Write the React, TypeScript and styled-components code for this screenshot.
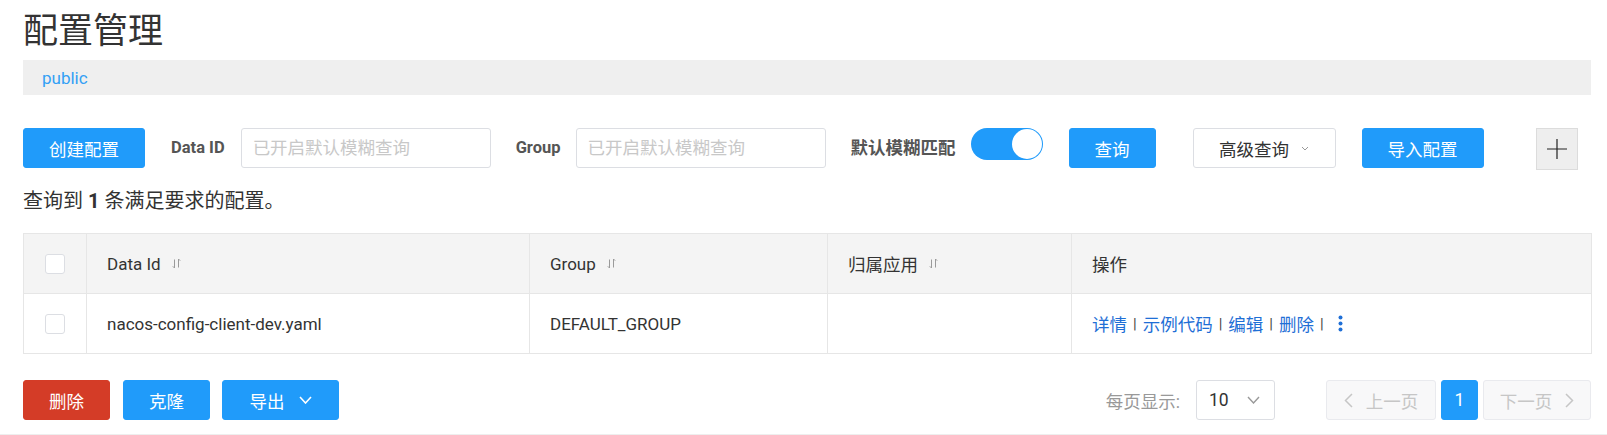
import React from "react";
import styled, { createGlobalStyle } from "styled-components";

const GlobalStyle = createGlobalStyle`
  html, body { margin: 0; padding: 0; background: #fff; }
  body { font-family: Roboto, "Noto Sans CJK SC", sans-serif; color: #333; }
  * { box-sizing: border-box; }
`;

const Page = styled.div`
  width: 1607px;
  padding: 0 16px 0 23px;
  display: flex;
  flex-direction: column;
`;

const Title = styled.h1`
  margin: 10px 0 0;
  height: 36px;
  font-family: "Noto Sans CJK SC", sans-serif;
  font-size: 35px;
  line-height: 36px;
  font-weight: 400;
  color: #333;
`;

const NamespaceBar = styled.div`
  margin-top: 14px;
  height: 35px;
  background: #efefef;
  display: flex;
  align-items: center;
  padding-left: 19px;
  font-size: 17px;
  color: #33a0f5;
`;

const Toolbar = styled.div`
  margin-top: 33px;
  height: 42px;
  display: flex;
  align-items: flex-start;
`;

const Button = styled.button<{ $variant?: "primary" | "danger" | "normal"; $w: number; $ml?: number }>`
  width: ${(p) => p.$w}px;
  height: 40px;
  margin-left: ${(p) => p.$ml ?? 0}px;
  flex: none;
  border-radius: 3px;
  display: flex;
  align-items: center;
  justify-content: center;
  gap: ${(p) => (p.$variant === "normal" ? 12 : 14)}px;
  font-family: Roboto, "Noto Sans CJK SC", sans-serif;
  font-size: 17.5px;
  cursor: pointer;
  padding: 0;
  border: 1px solid
    ${(p) => (p.$variant === "danger" ? "#d43c27" : p.$variant === "normal" ? "#dcdee3" : "#209bfa")};
  background: ${(p) => (p.$variant === "danger" ? "#d43c27" : p.$variant === "normal" ? "#fff" : "#209bfa")};
  color: ${(p) => (p.$variant === "normal" ? "#333" : "#fff")};
`;

const FieldLabel = styled.span<{ $ml: number; $cjk?: boolean }>`
  margin-left: ${(p) => p.$ml}px;
  line-height: 40px;
  font-size: ${(p) => (p.$cjk ? 17.5 : 16.5)}px;
  font-weight: 700;
  color: #555;
  white-space: nowrap;
`;

const SearchInput = styled.input<{ $ml: number }>`
  margin-left: ${(p) => p.$ml}px;
  width: 250px;
  height: 40px;
  border: 1px solid #dcdee3;
  border-radius: 3px;
  padding: 0 11px;
  font-family: Roboto, "Noto Sans CJK SC", sans-serif;
  font-size: 17.5px;
  color: #333;
  outline: none;
  &::placeholder { color: #c8c8c8; }
`;

const Switch = styled.div<{ $ml: number }>`
  margin-left: ${(p) => p.$ml}px;
  width: 72px;
  height: 32px;
  border-radius: 16px;
  background: #209bfa;
  display: flex;
  align-items: center;
  justify-content: flex-end;
  padding: 0 1px;
  flex: none;
`;

const Knob = styled.span`
  width: 30px;
  height: 30px;
  border-radius: 50%;
  background: #fff;
`;

const PlusButton = styled.button<{ $ml: number }>`
  margin-left: ${(p) => p.$ml}px;
  width: 42px;
  height: 42px;
  border: 1px solid #dcdcdc;
  background: #eee;
  display: flex;
  align-items: center;
  justify-content: center;
  padding: 0;
  flex: none;
`;

const Summary = styled.div`
  margin-top: 21px;
  font-size: 20px;
  line-height: 20px;
  color: #333;
  & strong { font-weight: 700; }
`;

const Table = styled.table`
  margin-top: 22px;
  width: 1568px;
  border-collapse: collapse;
  table-layout: fixed;
`;

const Th = styled.th<{ $center?: boolean; $cjk?: boolean }>`
  height: 60px;
  padding: ${(p) => (p.$center ? "0" : "0 20px")};
  text-align: ${(p) => (p.$center ? "center" : "left")};
  background: #f4f4f4;
  border: 1px solid #e6e6e6;
  font-weight: 400;
  font-size: ${(p) => (p.$cjk ? 17.5 : 17)}px;
  color: #333;
  vertical-align: middle;
`;

const Td = styled.td<{ $center?: boolean }>`
  height: 60px;
  padding: ${(p) => (p.$center ? "0" : "0 20px")};
  text-align: ${(p) => (p.$center ? "center" : "left")};
  background: #fff;
  border: 1px solid #e6e6e6;
  font-size: 17px;
  color: #333;
  vertical-align: middle;
`;

const HeadInner = styled.span`
  display: inline-flex;
  align-items: center;
  gap: 11px;
`;

const CheckBox = styled.span`
  display: inline-block;
  width: 20px;
  height: 20px;
  border: 1px solid #dcdee3;
  border-radius: 3px;
  background: #fff;
  vertical-align: middle;
`;

const Actions = styled.span`
  display: inline-flex;
  align-items: center;
  font-size: 17.5px;
`;

const ActionLink = styled.a`
  color: #1f6fd6;
  text-decoration: none;
  cursor: pointer;
`;

const Sep = styled.span`
  color: #444;
  margin: 0 6px;
  font-size: 15px;
`;

const MoreIcon = styled.span`
  margin-left: 8px;
  display: inline-flex;
`;

const BottomBar = styled.div`
  margin-top: 26px;
  display: flex;
  justify-content: space-between;
  align-items: center;
`;

const Group = styled.div`
  display: flex;
  align-items: center;
`;

const PageSizeLabel = styled.span`
  font-size: 17.5px;
  color: #999;
`;

const Select = styled.div`
  margin-left: 16px;
  width: 79px;
  height: 40px;
  border: 1px solid #dcdee3;
  border-radius: 3px;
  display: flex;
  align-items: center;
  justify-content: space-between;
  padding: 0 14px 0 12px;
  font-size: 17.5px;
  color: #333;
`;

const PagerButton = styled.button<{ $w: number; $ml: number; $current?: boolean }>`
  margin-left: ${(p) => p.$ml}px;
  width: ${(p) => p.$w}px;
  height: 40px;
  border-radius: 3px;
  border: 1px solid ${(p) => (p.$current ? "#209bfa" : "#e9eaee")};
  background: ${(p) => (p.$current ? "#209bfa" : "#f8f8f9")};
  color: ${(p) => (p.$current ? "#fff" : "#c6c6c6")};
  font-family: Roboto, "Noto Sans CJK SC", sans-serif;
  font-size: 17.5px;
  display: flex;
  align-items: center;
  justify-content: center;
  gap: 13px;
  padding: 0;
`;

const Footer = styled.div`
  margin-top: 14px;
  margin-left: -23px;
  margin-right: -16px;
  border-top: 1px solid #eee;
  height: 2px;
`;

const SortIcon = () => (
  <svg width="9" height="11" viewBox="0 0 9 11" fill="none" stroke="#9a9a9a" strokeWidth="1">
    <path d="M2.5 1.5v8.5M2.5 10L0.8 8.3" />
    <path d="M6.5 9.5V1M6.5 1l1.7 1.7" />
  </svg>
);

const Chevron = ({ color, w, h, sw }: { color: string; w: number; h: number; sw: number }) => (
  <svg width={w} height={h} viewBox={`0 0 ${w} ${h}`} fill="none" stroke={color} strokeWidth={sw}>
    <path d={`M1 1L${w / 2} ${h - 1}L${w - 1} 1`} />
  </svg>
);

const SideChevron = ({ dir }: { dir: "left" | "right" }) => (
  <svg width="9" height="15" viewBox="0 0 9 15" fill="none" stroke="#c6c6c6" strokeWidth="1.5">
    <path d={dir === "left" ? "M8 1L1.5 7.5L8 14" : "M1 1L7.5 7.5L1 14"} />
  </svg>
);

const Dots = () => (
  <svg width="5" height="17" viewBox="0 0 5 17" fill="#1f6fd6">
    <circle cx="2.5" cy="2.5" r="2" />
    <circle cx="2.5" cy="8.5" r="2" />
    <circle cx="2.5" cy="14.5" r="2" />
  </svg>
);

export default function App() {
  return (
    <>
      <GlobalStyle />
      <Page>
        <Title>配置管理</Title>
        <NamespaceBar>public</NamespaceBar>

        <Toolbar>
          <Button $variant="primary" $w={122}>创建配置</Button>
          <FieldLabel $ml={26}>Data ID</FieldLabel>
          <SearchInput $ml={16} placeholder="已开启默认模糊查询" />
          <FieldLabel $ml={25}>Group</FieldLabel>
          <SearchInput $ml={15} placeholder="已开启默认模糊查询" />
          <FieldLabel $ml={25} $cjk>默认模糊匹配</FieldLabel>
          <Switch $ml={15}>
            <Knob />
          </Switch>
          <Button $variant="primary" $w={87} $ml={26}>查询</Button>
          <Button $variant="normal" $w={143} $ml={37}>
            高级查询
            <Chevron color="#999" w={8} h={5} sw={1} />
          </Button>
          <Button $variant="primary" $w={122} $ml={26}>导入配置</Button>
          <PlusButton $ml={52}>
            <svg width="20" height="20" viewBox="0 0 20 20" stroke="#222" strokeWidth="1.2">
              <path d="M10 0v20M0 10h20" />
            </svg>
          </PlusButton>
        </Toolbar>

        <Summary>
          查询到 <strong>1</strong> 条满足要求的配置。
        </Summary>

        <Table>
          <colgroup>
            <col style={{ width: 63 }} />
            <col style={{ width: 443 }} />
            <col style={{ width: 298 }} />
            <col style={{ width: 244 }} />
            <col style={{ width: 520 }} />
          </colgroup>
          <thead>
            <tr>
              <Th $center>
                <CheckBox />
              </Th>
              <Th>
                <HeadInner>
                  Data Id <SortIcon />
                </HeadInner>
              </Th>
              <Th>
                <HeadInner>
                  Group <SortIcon />
                </HeadInner>
              </Th>
              <Th $cjk>
                <HeadInner>
                  归属应用 <SortIcon />
                </HeadInner>
              </Th>
              <Th $cjk>操作</Th>
            </tr>
          </thead>
          <tbody>
            <tr>
              <Td $center>
                <CheckBox />
              </Td>
              <Td>nacos-config-client-dev.yaml</Td>
              <Td>DEFAULT_GROUP</Td>
              <Td />
              <Td>
                <Actions>
                  <ActionLink>详情</ActionLink>
                  <Sep>|</Sep>
                  <ActionLink>示例代码</ActionLink>
                  <Sep>|</Sep>
                  <ActionLink>编辑</ActionLink>
                  <Sep>|</Sep>
                  <ActionLink>删除</ActionLink>
                  <Sep>|</Sep>
                  <MoreIcon>
                    <Dots />
                  </MoreIcon>
                </Actions>
              </Td>
            </tr>
          </tbody>
        </Table>

        <BottomBar>
          <Group>
            <Button $variant="danger" $w={87}>删除</Button>
            <Button $variant="primary" $w={87} $ml={13}>克隆</Button>
            <Button $variant="primary" $w={117} $ml={12}>
              导出
              <Chevron color="#fff" w={13} h={8} sw={1.6} />
            </Button>
          </Group>
          <Group>
            <PageSizeLabel>每页显示:</PageSizeLabel>
            <Select>
              10
              <Chevron color="#999" w={13} h={8} sw={1.4} />
            </Select>
            <PagerButton $w={110} $ml={51}>
              <SideChevron dir="left" />
              上一页
            </PagerButton>
            <PagerButton $w={37} $ml={5} $current>
              1
            </PagerButton>
            <PagerButton $w={108} $ml={5}>
              下一页
              <SideChevron dir="right" />
            </PagerButton>
          </Group>
        </BottomBar>
        <Footer />
      </Page>
    </>
  );
}
